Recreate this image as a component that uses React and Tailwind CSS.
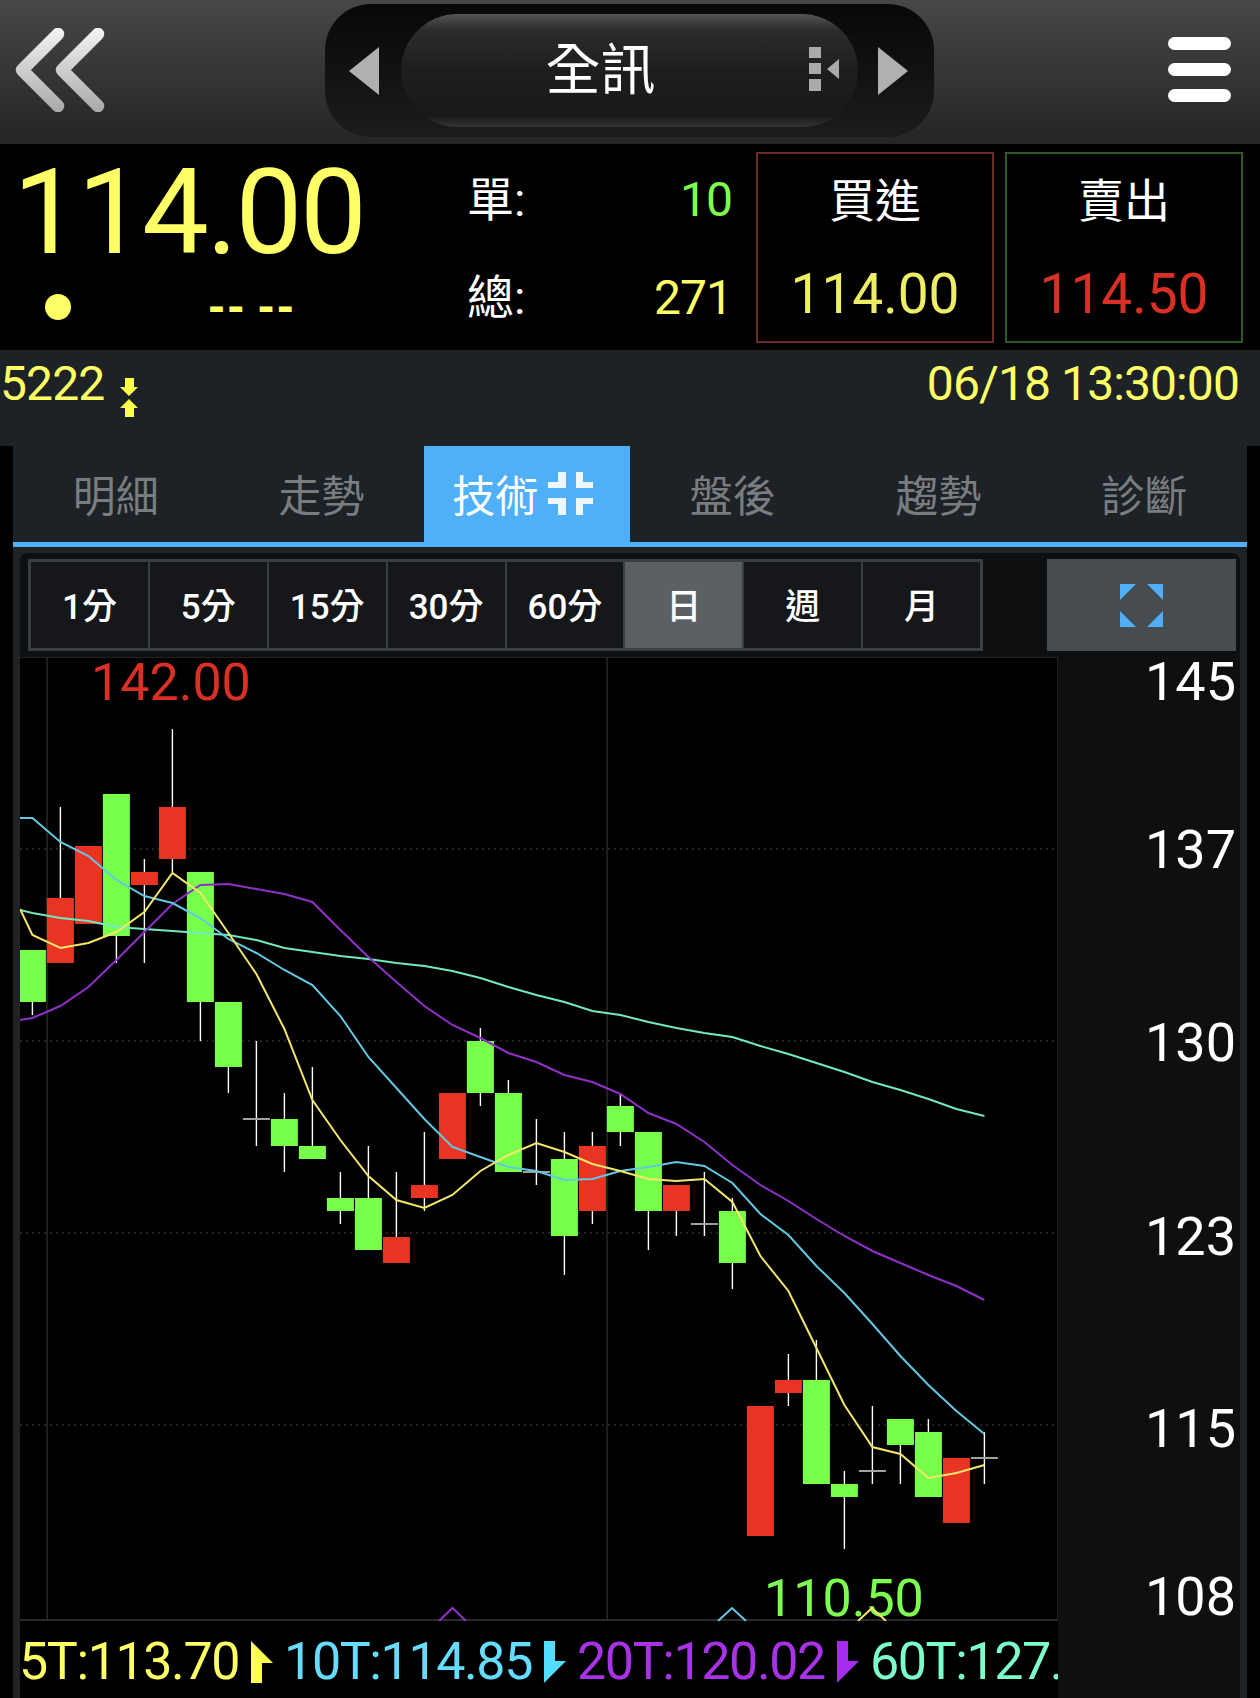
import React from "react";

const FONT = { fontFamily: '"Roboto", "Noto Sans CJK TC", sans-serif' };

// [index, colour, high, body top, body bottom, low] in page pixels
const CANDLES = [
  [0, "g", 950, 950, 1002, 1015],
  [1, "r", 807, 898, 963, 963],
  [2, "r", 846, 846, 924, 924],
  [3, "g", 794, 794, 936, 963],
  [4, "r", 859, 872, 885, 963],
  [5, "r", 729, 807, 859, 872],
  [6, "g", 872, 872, 1002, 1041],
  [7, "g", 1002, 1002, 1067, 1093],
  [8, "d", 1041, 1119, 1119, 1146],
  [9, "g", 1093, 1119, 1146, 1172],
  [10, "g", 1067, 1146, 1159, 1159],
  [11, "g", 1172, 1198, 1211, 1224],
  [12, "g", 1146, 1198, 1250, 1250],
  [13, "r", 1172, 1237, 1263, 1263],
  [14, "r", 1132, 1185, 1198, 1211],
  [15, "r", 1093, 1093, 1159, 1159],
  [16, "g", 1028, 1041, 1093, 1106],
  [17, "g", 1080, 1093, 1172, 1172],
  [18, "d", 1119, 1172, 1172, 1185],
  [19, "g", 1132, 1159, 1236, 1275],
  [20, "r", 1132, 1146, 1211, 1224],
  [21, "g", 1093, 1106, 1132, 1146],
  [22, "g", 1132, 1132, 1211, 1250],
  [23, "r", 1185, 1185, 1211, 1236],
  [24, "d", 1172, 1224, 1224, 1236],
  [25, "g", 1198, 1211, 1263, 1289],
  [26, "r", 1406, 1406, 1536, 1536],
  [27, "r", 1354, 1380, 1393, 1406],
  [28, "g", 1340, 1380, 1484, 1484],
  [29, "g", 1471, 1484, 1497, 1549],
  [30, "d", 1406, 1471, 1471, 1484],
  [31, "g", 1419, 1419, 1445, 1484],
  [32, "g", 1419, 1432, 1497, 1497],
  [33, "r", 1458, 1458, 1523, 1523],
  [34, "d", 1432, 1458, 1458, 1484],
];

const MA5 = [909, 935, 948, 943, 932, 912, 873, 893, 933, 974, 1029, 1100, 1140, 1176, 1200, 1208, 1195, 1171, 1155, 1143, 1152, 1164, 1171, 1179, 1181, 1179, 1202, 1256, 1291, 1348, 1405, 1447, 1454, 1478, 1473, 1465];
const MA10 = [818, 818, 842, 856, 880, 896, 903, 918, 939, 953, 970, 985, 1016, 1057, 1088, 1119, 1147, 1157, 1167, 1171, 1180, 1179, 1171, 1167, 1162, 1166, 1183, 1214, 1235, 1266, 1293, 1324, 1356, 1385, 1411, 1434];
const MA20 = [1020, 1018, 1006, 987, 960, 932, 904, 885, 884, 889, 894, 902, 930, 957, 982, 1006, 1025, 1038, 1053, 1062, 1075, 1082, 1094, 1113, 1124, 1142, 1165, 1185, 1201, 1219, 1236, 1251, 1263, 1275, 1286, 1300];
const MA60 = [910, 913, 918, 921, 927, 929, 931, 933, 935, 940, 948, 952, 956, 959, 963, 966, 971, 978, 987, 995, 1002, 1011, 1015, 1022, 1028, 1033, 1037, 1046, 1054, 1063, 1072, 1082, 1090, 1099, 1109, 1116];

const cx = (i) => 32.4 + 28 * i;
// first value of each series is the point on the chart's left edge
const linePoints = (ys) => ys.map((y, i) => `${i === 0 ? 20 : cx(i - 1)},${y}`).join(" ");

export default function App() {
  return (
    <div className="w-[1260px] h-[1698px] bg-black overflow-hidden flex flex-col" style={FONT}>
      <TopBar />
      <Quote />
      <div className="h-[96px] bg-[#1d2226] flex justify-between pt-[7px] text-[48px] leading-[54px] tracking-[-0.9px] text-[#ffff66]">
        <div className="flex">
          <span>5222</span>
          <svg width="18" height="40" viewBox="0 0 18 40" className="ml-[16px] mt-[21px]">
            <path d="M5 0h9v9h4l-9 9-9-9h5zM9 21l9 9h-4v9H5v-9H0z" fill="#ffff4d" />
          </svg>
        </div>
        <span className="pr-[21px]">06/18 13:30:00</span>
      </div>
      <Tabs />
      <div className="flex-1 mx-[13px] bg-[#1f2326] px-[7px] pt-[6px] min-h-0">
        <div className="h-full bg-[#0e0f10] rounded-t-[8px] overflow-hidden flex flex-col">
          <Toolbar />
          <div className="flex-1 flex min-h-0 mt-[6px]">
            <div className="w-[1038px] flex flex-col">
              <Chart />
              <Legend />
            </div>
            <Axis />
          </div>
        </div>
      </div>
    </div>
  );
}

function TopBar() {
  return (
    <div className="h-[144px] shrink-0 flex items-start bg-linear-to-b from-[#474747] to-[#252525]">
      <div className="w-[325px] pt-[28px] pl-[15px]">
        <svg width="90" height="84" viewBox="0 0 90 84" fill="none" strokeWidth="12.5" strokeLinecap="round" strokeLinejoin="round">
          <defs>
            <linearGradient id="backGrad" gradientUnits="userSpaceOnUse" x1="0" y1="0" x2="0" y2="84">
              <stop offset="0" stopColor="#f4f4f4" />
              <stop offset="1" stopColor="#a8a8a8" />
            </linearGradient>
          </defs>
          <path d="M43 6 7 42l36 36M83 6 47 42l36 36" stroke="url(#backGrad)" />
        </svg>
      </div>
      <div className="w-[609px] h-[133px] mt-[4px] rounded-[46px] bg-linear-to-b from-[#080808] to-[#1c1c1c] flex items-center justify-between px-[24px]">
        <svg width="30" height="48" viewBox="0 0 30 48">
          <path d="M0 24 30 0v48z" fill="#b0b0b0" />
        </svg>
        <div className="w-[457px] h-[113px] rounded-full bg-[linear-gradient(#555_0%,#2c2c2c_14%,#1e1e1e_50%,#191919_90%,#333_100%)] flex items-center justify-center relative">
          <span className="text-[55px] leading-none text-white pr-[58px]">全訊</span>
          <svg width="32" height="44" viewBox="0 0 32 44" className="absolute right-[17px] top-[33px]">
            <path d="M0 0h12v11H0zM0 16h12v11H0zM0 32h12v12H0zM30 12v20L18 22z" fill="#aaaaaa" />
          </svg>
        </div>
        <svg width="30" height="48" viewBox="0 0 30 48" className="-translate-x-[2px]">
          <path d="M30 24 0 0v48z" fill="#b0b0b0" />
        </svg>
      </div>
      <div className="flex-1 flex flex-col items-end pr-[29px] pt-[37px] gap-[13px]">
        <div className="w-[63px] h-[13px] rounded-full bg-white" />
        <div className="w-[63px] h-[13px] rounded-full bg-white" />
        <div className="w-[63px] h-[13px] rounded-full bg-white" />
      </div>
    </div>
  );
}

function Quote() {
  return (
    <div className="h-[206px] shrink-0 bg-black flex">
      <div className="w-[467px]">
        <div className="text-[119px] leading-[119px] tracking-[-2.4px] text-[#ffff66] pl-[13px] pt-[9px]">114.00</div>
        <div className="flex items-center mt-[12px]">
          <div className="w-[26px] h-[26px] rounded-full bg-[#ffff66] ml-[45px]" />
          <div className="ml-[136px] text-[43px] leading-[46px] font-black text-[#ffff66]">-- --</div>
        </div>
      </div>
      <div className="w-[266px] pt-[30px]">
        <div className="flex justify-between items-center h-[52px] text-[47px] text-white">
          <span>單:</span>
          <span className="text-[48px] tracking-[-1px] text-[#7dff4f] pr-[1px]">10</span>
        </div>
        <div className="flex justify-between items-center h-[52px] mt-[46px] text-[47px] text-white">
          <span>總:</span>
          <span className="text-[48px] tracking-[-1px] text-[#ffff66] pr-[1px]">271</span>
        </div>
      </div>
      <PriceBox label="買進" price="114.00" border="border-[#6b2c26]" color="text-[#eeee66]" className="ml-[23px]" />
      <PriceBox label="賣出" price="114.50" border="border-[#2d5a22]" color="text-[#d93025]" className="ml-[11px]" />
    </div>
  );
}

function PriceBox({ label, price, border, color, className }) {
  return (
    <div className={`w-[238px] h-[191px] mt-[8px] border-2 ${border} flex flex-col items-center ${className}`}>
      <div className="text-[46px] leading-[54px] text-white mt-[20px]">{label}</div>
      <div className={`text-[55px] leading-[60px] mt-[36px] ${color}`}>{price}</div>
    </div>
  );
}

function Tabs() {
  const tabs = ["明細", "走勢", "技術", "盤後", "趨勢", "診斷"];
  return (
    <div className="mx-[13px] h-[101px] shrink-0 bg-[#1d2226] border-b-[5px] border-[#4fb0f8] grid grid-cols-6">
      {tabs.map((t) => (
        <div
          key={t}
          className={`flex items-center justify-center text-[43px] ${
            t === "技術" ? "bg-[#4fb0f8] text-white pr-[9px]" : "text-[#7a7d80]"
          }`}
        >
          <span className="mt-[6px]">{t}</span>
          {t === "技術" && (
            <svg width="45" height="44" viewBox="0 0 45 44" className="ml-[10px]">
              <path
                d="M10 0h8v16H0v-6h10zM28 0h7v10h10v6H28zM0 26h18v17h-8V32H0zM28 26h17v6H35v11h-7z"
                fill="#eef7ff"
              />
            </svg>
          )}
        </div>
      ))}
    </div>
  );
}

function Toolbar() {
  const items = ["1分", "5分", "15分", "30分", "60分", "日", "週", "月"];
  return (
    <div className="flex shrink-0 pl-[8px] pr-[4px] pt-[6px]">
      <div className="w-[955px] h-[92px] border-[3px] border-[#3b3e41] grid grid-cols-8 bg-[#3b3e41] gap-[2px]">
        {items.map((t) => (
          <div
            key={t}
            className={`flex items-center justify-center text-[35px] font-medium text-white pt-[6px] ${
              t === "日" ? "bg-[#5b6064]" : "bg-[#15171a]"
            }`}
          >
            {t}
          </div>
        ))}
      </div>
      <div className="ml-auto w-[189px] h-[92px] bg-[#474c50] flex items-center justify-center">
        <svg width="43" height="43" viewBox="0 0 43 43">
          <path d="M0 0h16L0 16zM43 0H27l16 16zM0 43V27l16 16zM43 43V27L27 43z" fill="#4fb0f8" />
        </svg>
      </div>
    </div>
  );
}

function Chart() {
  return (
    <div className="relative h-[964px] bg-black border-b-2 border-[#2a2a2a] shrink-0">
      <svg width="1038" height="964" viewBox="20 657 1038 964" className="block">
        <rect x="20" y="657" width="1038" height="1" fill="#222" />
        <rect x="1057" y="657" width="1" height="964" fill="#222" />
        {[849, 1041, 1233, 1425].map((y) => (
          <line key={y} x1="20" x2="1057" y1={y} y2={y} stroke="#2c2c2c" strokeWidth="1.5" strokeDasharray="2 4" />
        ))}
        <line x1="47" x2="47" y1="657" y2="1621" stroke="#2a2a2a" strokeWidth="1.5" />
        <line x1="607" x2="607" y1="657" y2="1621" stroke="#2a2a2a" strokeWidth="1.5" />
        {CANDLES.map(([i, c, high, top, bot, low]) => {
          const x = cx(i);
          return (
            <g key={i}>
              <line x1={x} x2={x} y1={high} y2={low} stroke="#ffffff" strokeWidth="1.4" />
              {c === "d" ? (
                <line x1={x - 13.5} x2={x + 13.5} y1={top} y2={top} stroke="#a0a0a0" strokeWidth="2" />
              ) : (
                <rect x={x - 13.5} y={top} width="27" height={bot - top} fill={c === "g" ? "#78ff4b" : "#e93424"} />
              )}
            </g>
          );
        })}
        <polyline points={linePoints(MA60)} fill="none" stroke="#72e8c4" strokeWidth="2" />
        <polyline points={linePoints(MA20)} fill="none" stroke="#8f30c8" strokeWidth="2" />
        <polyline points={linePoints(MA10)} fill="none" stroke="#62c8e4" strokeWidth="2" />
        <polyline points={linePoints(MA5)} fill="none" stroke="#f5e66a" strokeWidth="2" />
        <path d="M439 1621 452.5 1608 466 1621" fill="none" stroke="#8f30c8" strokeWidth="2" />
        <path d="M718 1621 732 1608 746 1621" fill="none" stroke="#62c8e4" strokeWidth="2" />
      </svg>
      <div className="absolute left-[71px] top-[-4px] text-[52px] leading-[60px] text-[#d93025]">142.00</div>
      <div className="absolute left-[744px] top-[912px] text-[52px] leading-[60px] text-[#7dff4f]">110.50</div>
      <svg width="30" height="14" viewBox="0 0 30 14" className="absolute left-[837px] top-[950px]">
        <path d="M1 14 15 1l14 13" fill="none" stroke="#f5e66a" strokeWidth="2" />
      </svg>
    </div>
  );
}

function Legend() {
  return (
    <div className="flex-1 bg-black overflow-hidden flex items-start pt-[15px] text-[52px] leading-[52px] tracking-[-1.4px] whitespace-nowrap">
      <span className="text-[#ffff66] -ml-[1px]">5T:113.70</span>
      <svg width="22" height="42" viewBox="0 0 22 42" className="ml-[12px] mr-[11px] mt-[5px] shrink-0">
        <path d="M0 0l22 22H11v20H0z" fill="#ffff4d" />
      </svg>
      <span className="text-[#66ddff]">10T:114.85</span>
      <svg width="22" height="42" viewBox="0 0 22 42" className="ml-[12px] mr-[11px] mt-[5px] shrink-0">
        <path d="M0 0h11v20h11L0 42z" fill="#55ddff" />
      </svg>
      <span className="text-[#a832e8]">20T:120.02</span>
      <svg width="22" height="42" viewBox="0 0 22 42" className="ml-[12px] mr-[11px] mt-[5px] shrink-0">
        <path d="M0 0h11v20h11L0 42z" fill="#a82bf0" />
      </svg>
      <span className="text-[#7dffcc]">60T:127.</span>
    </div>
  );
}

function Axis() {
  return (
    <div className="flex-1 flex flex-col items-end pr-[4px] text-[54px] leading-[60px] text-white">
      <div className="-mt-[5px]">145</div>
      <div className="mt-[108px]">137</div>
      <div className="mt-[133px]">130</div>
      <div className="mt-[134px]">123</div>
      <div className="mt-[132px]">115</div>
      <div className="mt-[108px]">108</div>
    </div>
  );
}
